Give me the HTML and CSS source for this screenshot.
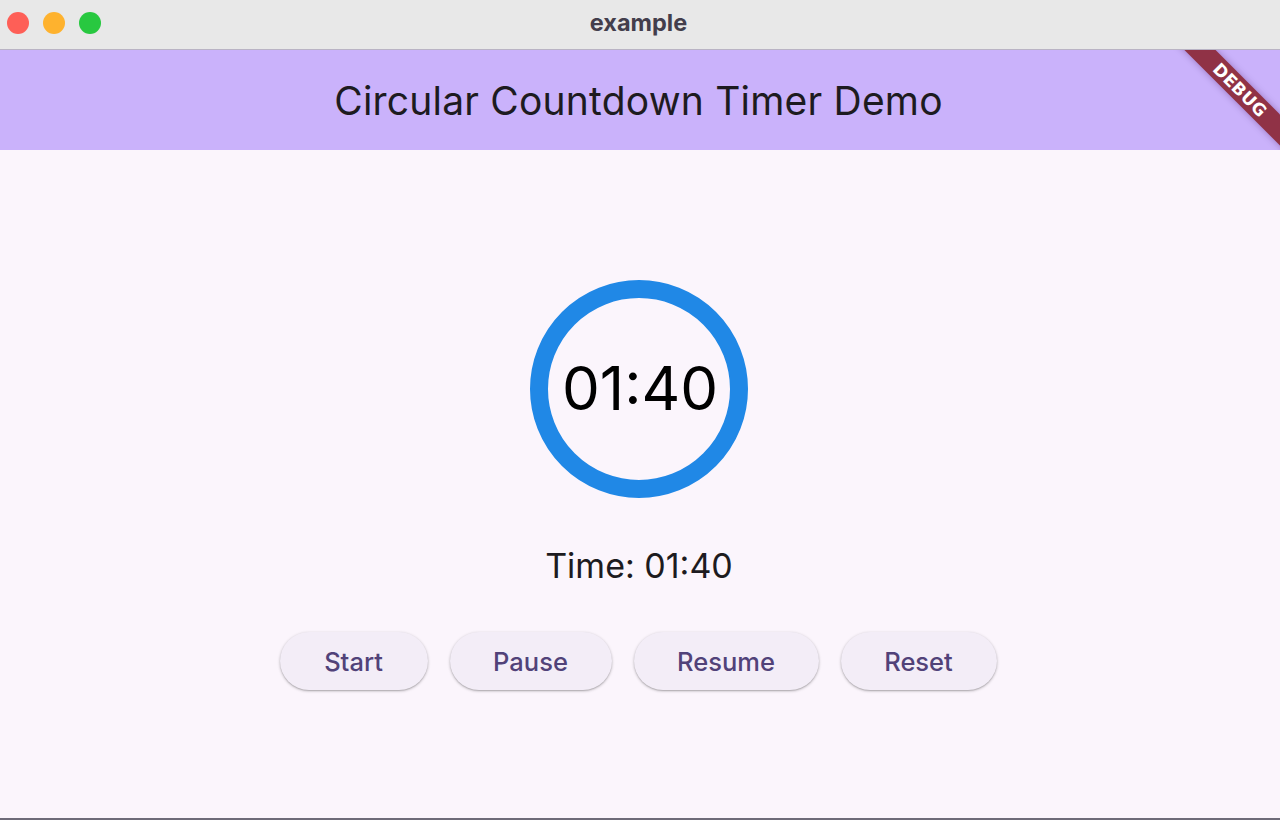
FILE: index.html
```html
<!DOCTYPE html>
<html>
<head>
<meta charset="utf-8">
<link rel="stylesheet" href="styles.css">
</head>
<body>
<div class="window">
  <div class="titlebar">
    <div class="lights">
      <span class="light red"></span>
      <span class="light yellow"></span>
      <span class="light green"></span>
    </div>
    <div class="wintitle">example</div>
  </div>
  <div class="appbar">
    <h1 class="apptitle">Circular Countdown Timer Demo</h1>
    <div class="banner-clip"><div class="banner">DEBUG</div></div>
  </div>
  <main class="content">
    <div class="timer">
      <svg class="ring" width="220" height="220" viewBox="0 0 220 220">
        <circle cx="110" cy="110" r="100" fill="none" stroke="#2088e6" stroke-width="18"/>
      </svg>
      <div class="timer-text">01:40</div>
    </div>
    <div class="time-label">Time: 01:40</div>
    <div class="buttons">
      <button class="btn btn-start">Start</button>
      <button class="btn btn-pause">Pause</button>
      <button class="btn btn-resume">Resume</button>
      <button class="btn btn-reset">Reset</button>
    </div>
  </main>
</div>
</body>
</html>
```
FILE: styles.css
```css
* { box-sizing: border-box; }
html, body { margin: 0; padding: 0; }
body {
  width: 1280px;
  height: 820px;
  overflow: hidden;
  font-family: Inter, "Noto Sans", sans-serif;
  background: #fbf5fc;
}
.window {
  display: flex;
  flex-direction: column;
  height: 820px;
  border-bottom: 2px solid #6e6a78;
}
.titlebar {
  height: 50px;
  flex: none;
  background: #e8e8e8;
  border-bottom: 1px solid #b9b3c4;
  display: flex;
  align-items: center;
  justify-content: center;
  position: relative;
}
.lights {
  position: absolute;
  left: 7px;
  top: 12px;
  display: flex;
  gap: 14px;
}
.light {
  width: 22px;
  height: 22px;
  border-radius: 50%;
  display: block;
}
.red { background: #fe5f57; }
.yellow { background: #feb22e; }
.green { background: #28c840; }
.wintitle {
  font-size: 23.5px;
  font-weight: 700;
  color: #433e4c;
  margin-left: -3px;
  margin-top: -4px;
}
.appbar {
  height: 100px;
  flex: none;
  background: #cab2fb;
  display: flex;
  align-items: center;
  justify-content: center;
  position: relative;
  overflow: hidden;
}
.apptitle {
  margin: 0 3px 0 0;
  font-weight: 400;
  font-size: 39px;
  color: #1d1b20;
  letter-spacing: 0.2px;
}
.banner-clip {
  position: absolute;
  right: 0;
  top: 0;
  width: 110px;
  height: 100px;
  overflow: hidden;
}
.banner {
  position: absolute;
  width: 170px;
  height: 22px;
  line-height: 22px;
  right: -45px;
  top: 29px;
  transform: rotate(45deg);
  background: #903246;
  color: #fff;
  font-family: "DejaVu Sans", sans-serif;
  font-weight: 700;
  font-size: 17px;
  text-align: center;
  letter-spacing: 0.3px;
  box-shadow: 0 0 7px rgba(60,0,80,0.35);
}
.content {
  flex: 1;
  display: flex;
  flex-direction: column;
  align-items: center;
  padding-top: 129px;
}
.timer {
  position: relative;
  width: 220px;
  height: 220px;
  margin-right: 2px;
}
.ring { display: block; }
.timer-text {
  position: absolute;
  inset: 0;
  display: flex;
  align-items: center;
  justify-content: center;
  font-size: 60px;
  color: #000;
  padding-bottom: 2px;
  padding-left: 2px;
}
.time-label {
  margin-top: 46px;
  margin-right: 2px;
  font-size: 34px;
  color: #1d1b20;
}
.buttons {
  margin-top: 46px;
  margin-right: 4px;
  display: flex;
  gap: 22px;
}
.btn {
  height: 58px;
  border: none;
  border-radius: 29px;
  background: #f3edf7;
  color: #514279;
  font-family: Inter, "Noto Sans", sans-serif;
  font-size: 25.5px;
  font-weight: 500;
  box-shadow: 0 1px 3px rgba(0,0,0,0.28), 0 1px 1px rgba(0,0,0,0.1);
}
.btn-start { width: 148px; }
.btn-pause { width: 162px; }
.btn-resume { width: 185px; }
.btn-reset { width: 156px; }
```
